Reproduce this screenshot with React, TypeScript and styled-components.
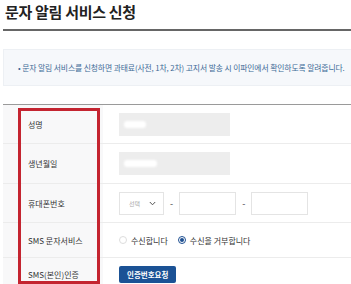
import React from 'react';
import styled, { createGlobalStyle } from 'styled-components';

const GlobalStyle = createGlobalStyle`
  html, body {
    margin: 0;
    padding: 0;
    background: #ffffff;
    overflow: hidden;
  }
  body {
    font-family: "Noto Sans CJK KR", "Noto Sans", sans-serif;
    color: #333333;
  }
`;

const Page = styled.div`
  width: 360px;
  padding-left: 3px;
`;

const Title = styled.h1`
  margin: 0;
  padding: 2px 0 8px 2px;
  font-size: 15px;
  line-height: 19px;
  font-weight: 700;
  color: #222222;
  letter-spacing: -0.3px;
  border-bottom: 2px solid #666666;
`;

const InfoBox = styled.div`
  margin-top: 18px;
  height: 35px;
  display: flex;
  align-items: center;
  padding-left: 14px;
  background: #f6f8fb;
  border: 1px solid #edf0f4;
  font-size: 7.8px;
  color: #3d6a96;
  white-space: nowrap;
  letter-spacing: -0.1px;
`;

const Table = styled.div`
  position: relative;
  margin-top: 18px;
  border-top: 1px solid #9a9a9a;
`;

const Row = styled.div<{ $h: number }>`
  display: grid;
  grid-template-columns: 100px 1fr;
  height: ${({ $h }) => $h}px;
  border-bottom: 1px solid #ececec;
`;

const Label = styled.div`
  display: flex;
  align-items: center;
  padding-left: 25px;
  background: #f8f8f9;
  font-size: 8px;
  color: #333333;
`;

const Value = styled.div`
  display: flex;
  align-items: center;
  gap: 6px;
  padding-left: 16px;
`;

const Masked = styled.div`
  width: 111px;
  height: 23px;
  background: #ededed;
  display: flex;
  align-items: center;
  padding-left: 5px;
  box-sizing: border-box;
`;

const Blur = styled.span<{ $w: number }>`
  display: block;
  width: ${({ $w }) => $w}px;
  height: 7px;
  border-radius: 3px;
  background: #ffffff;
  filter: blur(1px);
`;

const Select = styled.div`
  width: 45px;
  height: 23px;
  box-sizing: border-box;
  border: 1px solid #e4e4e4;
  display: flex;
  align-items: center;
  justify-content: space-between;
  padding: 0 7px 0 9px;
  font-size: 6px;
  color: #aaaaaa;
`;

const Dash = styled.span`
  font-size: 9px;
  color: #444444;
`;

const Input = styled.div`
  width: 57px;
  height: 23px;
  box-sizing: border-box;
  border: 1px solid #e4e4e4;
`;

const RadioLabel = styled.label`
  display: flex;
  align-items: center;
  gap: 4px;
  font-size: 8px;
  color: #333333;
  margin-right: 4px;
`;

const RadioDot = styled.span<{ $on?: boolean }>`
  width: 8px;
  height: 8px;
  box-sizing: border-box;
  border-radius: 50%;
  border: 1px solid ${({ $on }) => ($on ? '#1d4f91' : '#dddddd')};
  display: flex;
  align-items: center;
  justify-content: center;
  &::after {
    content: '';
    width: 4px;
    height: 4px;
    border-radius: 50%;
    background: ${({ $on }) => ($on ? '#1d4f91' : 'transparent')};
  }
`;

const Button = styled.button`
  height: 17px;
  padding: 0 8px;
  border: none;
  border-radius: 2px;
  background: #1b5295;
  color: #ffffff;
  font-family: inherit;
  font-size: 7.5px;
  font-weight: 700;
`;

const Highlight = styled.div`
  position: absolute;
  left: 15px;
  top: 3px;
  width: 82px;
  height: 176px;
  box-sizing: border-box;
  border: 3px solid #c42430;
  pointer-events: none;
`;

const Chevron = () => (
  <svg width="7" height="5" viewBox="0 0 7 5">
    <path d="M0.8 1 L3.5 3.8 L6.2 1" fill="none" stroke="#555" strokeWidth="1" />
  </svg>
);

export default function App() {
  return (
    <Page>
      <GlobalStyle />
      <Title>문자 알림 서비스 신청</Title>
      <InfoBox>• 문자 알림 서비스를 신청하면 과태료(사전, 1차, 2차) 고지서 발송 시 이파인에서 확인하도록 알려줍니다.</InfoBox>
      <Table>
        <Row $h={38}>
          <Label>성명</Label>
          <Value>
            <Masked><Blur $w={22} /></Masked>
          </Value>
        </Row>
        <Row $h={39}>
          <Label>생년월일</Label>
          <Value>
            <Masked><Blur $w={33} /></Masked>
          </Value>
        </Row>
        <Row $h={38}>
          <Label>휴대폰번호</Label>
          <Value>
            <Select>선택 <Chevron /></Select>
            <Dash>-</Dash>
            <Input />
            <Dash>-</Dash>
            <Input />
          </Value>
        </Row>
        <Row $h={34}>
          <Label>SMS 문자서비스</Label>
          <Value>
            <RadioLabel><RadioDot />수신합니다</RadioLabel>
            <RadioLabel><RadioDot $on />수신을 거부합니다</RadioLabel>
          </Value>
        </Row>
        <Row $h={32}>
          <Label>SMS(본인)인증</Label>
          <Value>
            <Button>인증번호요청</Button>
          </Value>
        </Row>
        <Highlight />
      </Table>
    </Page>
  );
}
